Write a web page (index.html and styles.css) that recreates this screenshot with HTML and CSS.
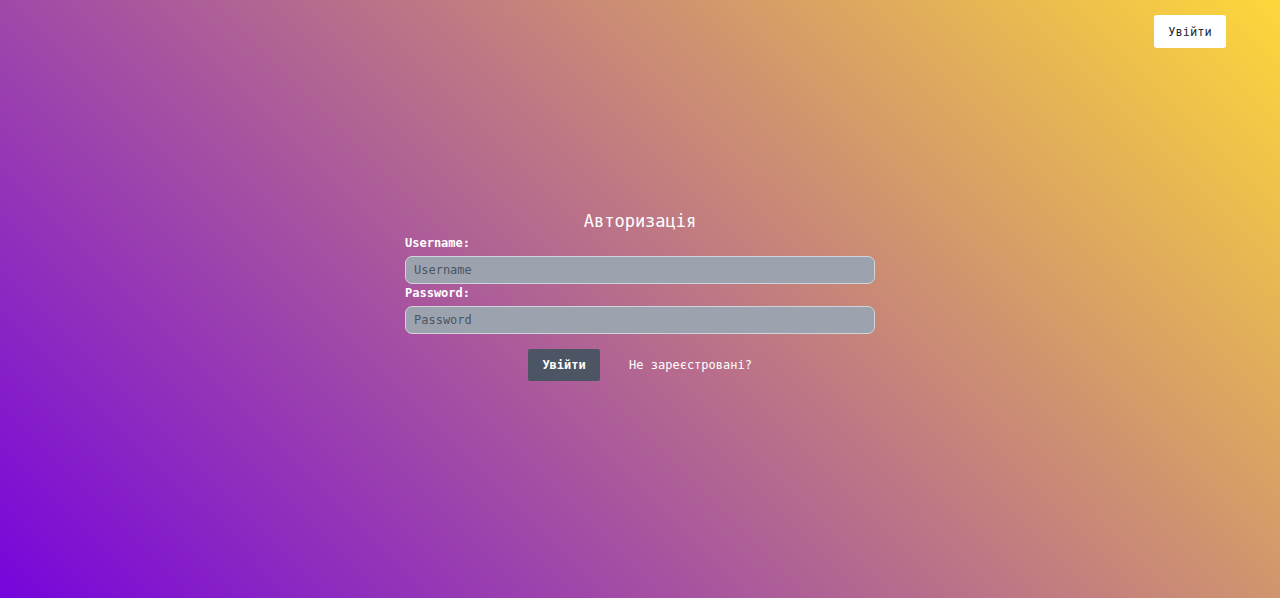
FILE: index.html
```html
<!DOCTYPE html>
<html lang="uk">
<head>
<meta charset="utf-8">
<title>Авторизація</title>
<link rel="stylesheet" href="styles.css">
</head>
<body>
<div class="page">
  <header class="topbar">
    <button class="top-btn" type="button">Увійти</button>
  </header>
  <main class="main">
    <form class="form">
      <h1 class="title">Авторизація</h1>
      <label class="label" for="u">Username:</label>
      <input class="input" id="u" type="text" placeholder="Username">
      <label class="label" for="p">Password:</label>
      <input class="input" id="p" type="password" placeholder="Password">
      <div class="actions">
        <button class="submit" type="button">Увійти</button>
        <a class="link" href="#">Не зареєстровані?</a>
      </div>
    </form>
  </main>
</div>
</body>
</html>
```
FILE: styles.css
```css
* { box-sizing: border-box; }
html, body { margin: 0; padding: 0; height: 100%; }
body {
  font-family: "DejaVu Sans Mono", "Liberation Mono", monospace;
  font-size: 12px;
  color: #fff;
}
.page {
  width: 100%;
  height: 598px;
  background: linear-gradient(45deg, #7505dc 0%, #fcd83a 100%);
  display: flex;
  flex-direction: column;
}
.topbar {
  display: flex;
  justify-content: flex-end;
  padding: 15px 54px 0 0;
}
.top-btn {
  width: 72px;
  height: 33px;
  background: #fff;
  border: none;
  border-radius: 3px;
  font-family: inherit;
  font-size: 12px;
  color: #1f2937;
  padding: 0;
}
.main {
  display: flex;
  justify-content: center;
  padding-top: 163px;
}
.form {
  width: 470px;
  display: flex;
  flex-direction: column;
}
.title {
  margin: 0 0 5px;
  text-align: center;
  font-size: 17px;
  font-weight: normal;
  line-height: 20px;
}
.label {
  font-weight: bold;
  font-size: 12px;
  line-height: 15px;
  margin-bottom: 5px;
}
.input {
  height: 28px;
  width: 100%;
  background: #9ca3af;
  border: 1px solid #d1d5db;
  border-radius: 7px;
  padding: 0 8px;
  font-family: inherit;
  font-size: 12px;
  color: #374151;
  margin-bottom: 2px;
}
.input::placeholder { color: #4b5563; }
.actions {
  display: flex;
  justify-content: center;
  align-items: center;
  gap: 29px;
  margin-top: 13px;
}
.submit {
  width: 72px;
  height: 32px;
  background: #4b5563;
  border: none;
  border-radius: 2px;
  color: #fff;
  font-family: inherit;
  font-weight: bold;
  font-size: 12px;
  padding: 0;
}
.link {
  color: #fff;
  text-decoration: none;
  font-size: 12px;
}
```
